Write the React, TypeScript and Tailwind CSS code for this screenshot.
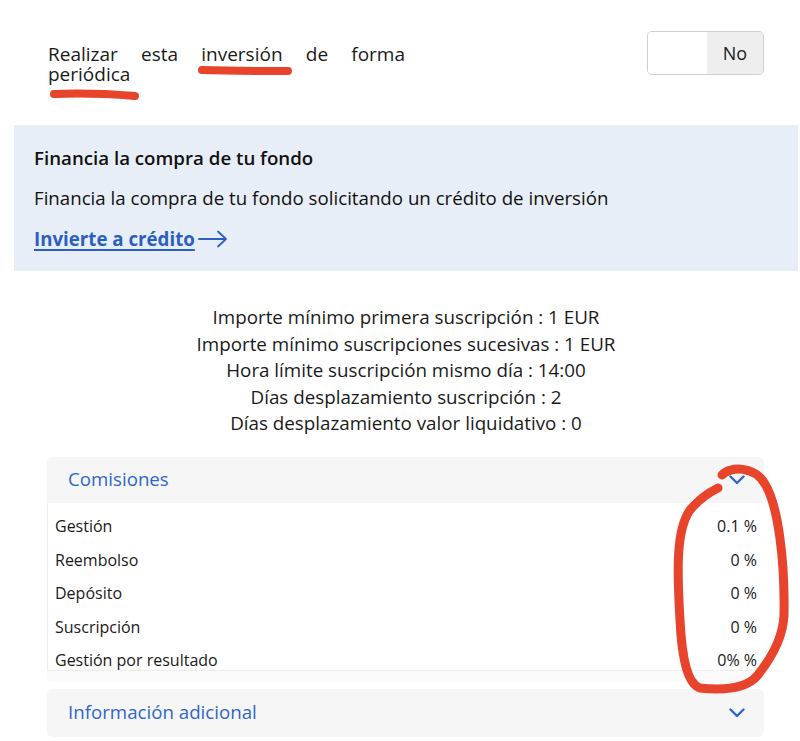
import React from "react";

const rows: [string, string][] = [
  ["Gestión", "0.1 %"],
  ["Reembolso", "0 %"],
  ["Depósito", "0 %"],
  ["Suscripción", "0 %"],
  ["Gestión por resultado", "0% %"],
];

const info = [
  "Importe mínimo primera suscripción : 1 EUR",
  "Importe mínimo suscripciones sucesivas : 1 EUR",
  "Hora límite suscripción mismo día : 14:00",
  "Días desplazamiento suscripción : 2",
  "Días desplazamiento valor liquidativo : 0",
];

function Chevron() {
  return (
    <svg width="16" height="10" viewBox="0 0 16 10" fill="none">
      <path d="M1.5 1.5 L8 8 L14.5 1.5" stroke="#2f66cc" strokeWidth="2.4" strokeLinecap="round" strokeLinejoin="round" />
    </svg>
  );
}

export default function App() {
  return (
    <div className="relative w-[800px] h-[741px] overflow-hidden bg-white text-[#1a1a1a] font-['Open_Sans',sans-serif]">
      {/* periodic investment toggle */}
      <div className="flex items-start justify-between pt-[31px] pl-[48px] pr-[36px]">
        <p className="w-[357px] pt-[13px] text-[19px] leading-[20px] text-justify [text-align-last:left]">
          Realizar esta inversión de forma periódica
        </p>
        <div className="flex h-[44px] w-[117px] overflow-hidden rounded-[5px] border border-[#cfcfcf]">
          <div className="w-[59px] bg-white" />
          <div className="flex flex-1 items-center justify-center bg-[#eeeeee] text-[18px]">No</div>
        </div>
      </div>

      {/* credit banner */}
      <div className="mt-[41px] ml-[14px] mr-[2px] h-[146px] bg-[#e8eef7] px-[20px] pt-[21px]">
        <div className="text-[18.7px] leading-[24px] font-semibold text-[#111]">Financia la compra de tu fondo</div>
        <div className="mt-[16px] text-[18.7px] leading-[24px] text-[#111]">
          Financia la compra de tu fondo solicitando un crédito de inversión
        </div>
        <div className="mt-[17px] flex items-center gap-[3px] text-[18.7px] leading-[24px] font-bold text-[#2b5fc4]">
          <span className="underline underline-offset-[3px] decoration-[1.5px]">Invierte a crédito</span>
          <svg width="30" height="18" viewBox="0 0 30 18" fill="none">
            <path d="M1 9 H28 M20 1.5 L28 9 L20 16.5" stroke="#2b5fc4" strokeWidth="1.8" strokeLinecap="round" strokeLinejoin="round" />
          </svg>
        </div>
      </div>

      {/* subscription details */}
      <div className="mt-[33px] flex flex-col items-center pl-[12px] text-[18.8px] leading-[26.5px]">
        {info.map((t) => (
          <div key={t}>{t}</div>
        ))}
      </div>

      {/* accordions */}
      <div className="mt-[20px] ml-[47px] mr-[36px] flex flex-col gap-[7px]">
        <div className="rounded-[6px] bg-[#fbfbfb] pb-[11px]">
          <div className="flex h-[46px] items-center justify-between rounded-t-[6px] bg-[#f6f6f6] pl-[21px] pr-[19px]">
            <span className="text-[18.7px] text-[#2f66cc]">Comisiones</span>
            <Chevron />
          </div>
          <div className="h-[168px] overflow-hidden border-b border-l border-[#eeeeee] bg-white pl-[7px] pr-[7px] pt-[7px] text-[16px] leading-[20px]">
            {rows.map(([k, v]) => (
              <div key={k} className="flex h-[33.5px] items-center justify-between">
                <span>{k}</span>
                <span>{v}</span>
              </div>
            ))}
          </div>
        </div>
        <div className="flex h-[48px] items-center justify-between rounded-[6px] bg-[#f6f6f6] pl-[21px] pr-[19px]">
          <span className="text-[18.7px] text-[#2f66cc]">Información adicional</span>
          <Chevron />
        </div>
      </div>

      {/* hand-drawn highlights */}
      <svg className="pointer-events-none absolute inset-0" width="800" height="741" viewBox="0 0 800 741" fill="none">
        <g stroke="#e8432b" strokeLinecap="round" strokeLinejoin="round">
          <path d="M202 70 C230 71, 262 71, 288 71" strokeWidth="8" />
          <path d="M54 94 C80 93, 110 94, 135 96" strokeWidth="8" />
          <path
            d="M722 475 C730 466, 755 466, 765 484 C778 505, 785 560, 784 615 C783 640, 770 660, 757 676 C745 690, 720 690, 700 688 C688 684, 682 660, 680 620 C677 570, 676 530, 690 510 C700 498, 710 492, 718 488"
            strokeWidth="9"
          />
        </g>
      </svg>
    </div>
  );
}
